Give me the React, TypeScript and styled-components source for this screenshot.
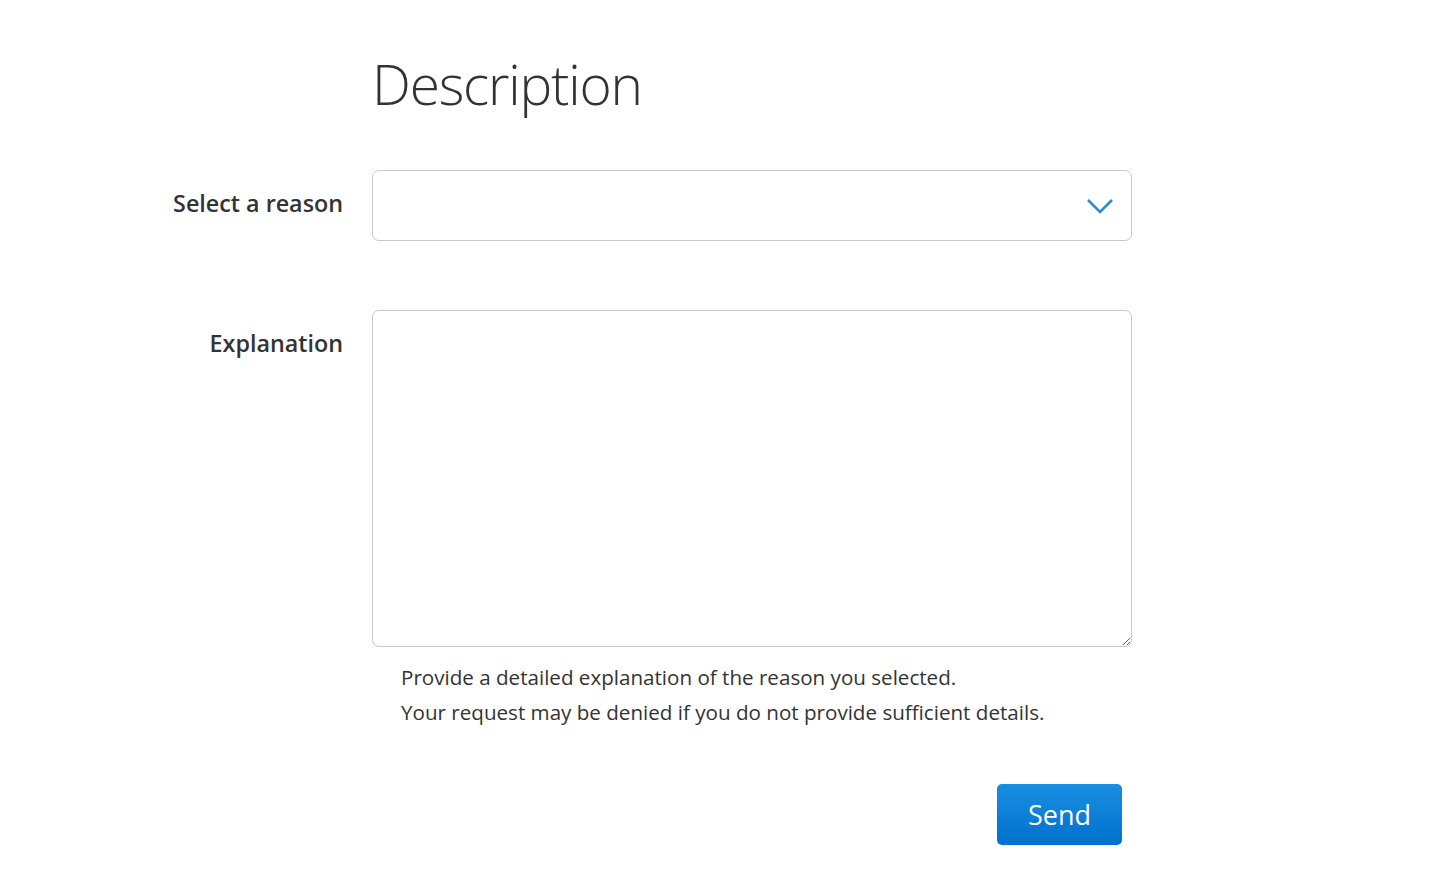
import styled, { createGlobalStyle } from "styled-components";

const GlobalStyle = createGlobalStyle`
    html, body {
        margin: 0;
        padding: 0;
        background: #ffffff;
    }
    body {
        font-family: "Open Sans", "Liberation Sans", sans-serif;
        color: #333333;
    }
`;

const Page = styled.div`
    width: 1456px;
    height: 894px;
    padding-top: 44px;
    box-sizing: border-box;
`;

const Form = styled.form`
    display: grid;
    grid-template-columns: 343px 760px;
    column-gap: 29px;
    align-items: start;
`;

const Title = styled.h1`
    grid-column: 2;
    margin: 0 0 46px;
    font-size: 55px;
    font-weight: 300;
    line-height: 80px;
    letter-spacing: -1.2px;
    color: #333333;
`;

const Label = styled.label`
    grid-column: 1;
    text-align: right;
    font-size: 23.3px;
    font-weight: 600;
    line-height: 67px;
    color: #333333;
`;

const SelectBox = styled.div`
    grid-column: 2;
    position: relative;
    height: 71px;
    box-sizing: border-box;
    border: 1px solid #c9c9c9;
    border-radius: 7px;
    background: #ffffff;
    margin-bottom: 69px;
`;

const Chevron = styled.svg`
    position: absolute;
    right: 17px;
    top: 26px;
`;

const TextArea = styled.textarea`
    grid-column: 2;
    display: block;
    width: 760px;
    height: 337px;
    box-sizing: border-box;
    border: 1px solid #c9c9c9;
    border-radius: 7px;
    resize: vertical;
    font-family: inherit;
    font-size: 20px;
    outline: none;
`;

const Help = styled.div`
    grid-column: 2;
    padding: 13px 0 0 29px;
    font-size: 20.6px;
    line-height: 35px;
    color: #333333;
`;

const Actions = styled.div`
    grid-column: 2;
    display: flex;
    justify-content: flex-end;
    padding: 54px 10px 0 0;
`;

const SendButton = styled.button`
    width: 125px;
    height: 61px;
    border: none;
    border-radius: 5px;
    background: linear-gradient(#1a8ee3, #0071cc);
    color: #ffffff;
    font-family: inherit;
    font-size: 27px;
    font-weight: 400;
    cursor: pointer;
`;

function App() {
    return (
        <Page>
            <GlobalStyle />
            <Form onSubmit={(e) => e.preventDefault()}>
                <div />
                <Title>Description</Title>

                <Label>Select a reason</Label>
                <SelectBox>
                    <Chevron width="28" height="18" viewBox="0 0 28 18">
                        <path d="M2 3 L14 15 L26 3" fill="none" stroke="#2b8bd3" strokeWidth="2.6" />
                    </Chevron>
                </SelectBox>

                <Label>Explanation</Label>
                <TextArea />

                <Help>
                    Provide a detailed explanation of the reason you selected.
                    <br />
                    Your request may be denied if you do not provide sufficient details.
                </Help>

                <Actions>
                    <SendButton type="submit">Send</SendButton>
                </Actions>
            </Form>
        </Page>
    );
}

export default App;
